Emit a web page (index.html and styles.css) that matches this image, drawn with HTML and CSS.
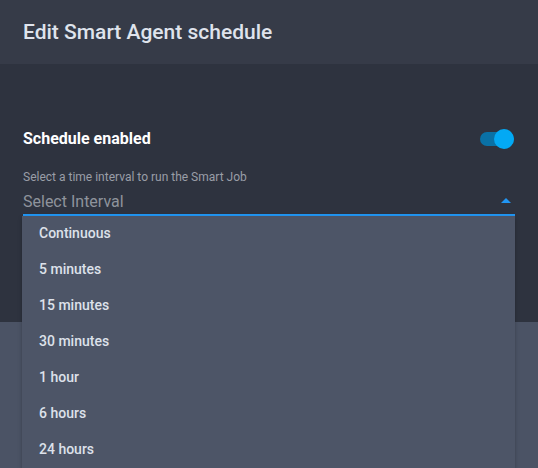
FILE: index.html
```html
<!DOCTYPE html>
<html>
<head>
<meta charset="utf-8">
<link rel="stylesheet" href="styles.css">
</head>
<body>
<div class="dialog">
  <div class="header">
    <h1 class="title">Edit Smart Agent schedule</h1>
  </div>
  <div class="content">
    <div class="row">
      <span class="row-label">Schedule enabled</span>
      <span class="switch"><span class="track"></span><span class="thumb"></span></span>
    </div>
    <div class="field">
      <div class="field-label">Select a time interval to run the Smart Job</div>
      <div class="field-value">
        <span class="placeholder">Select Interval</span>
        <svg class="arrow" width="10" height="5" viewBox="0 0 10 5"><path d="M0 5 L5 0 L10 5 Z" fill="#2196f3"/></svg>
      </div>
    </div>
  </div>
  <ul class="menu">
    <li class="item">Continuous</li>
    <li class="item">5 minutes</li>
    <li class="item">15 minutes</li>
    <li class="item">30 minutes</li>
    <li class="item">1 hour</li>
    <li class="item">6 hours</li>
    <li class="item">24 hours</li>
  </ul>
</div>
</body>
</html>
```
FILE: styles.css
```css
html, body {
  margin: 0;
  padding: 0;
}
body {
  background: #4b5365;
  font-family: Roboto, "Liberation Sans", sans-serif;
  width: 538px;
  height: 468px;
  overflow: hidden;
}
.dialog {
  position: relative;
}
.header {
  height: 64px;
  background: #363b48;
  padding: 0 23px;
  box-sizing: border-box;
}
.title {
  margin: 0;
  padding-top: 19px;
  font-size: 21px;
  line-height: 26px;
  font-weight: 500;
  color: #dfe3ec;
}
.content {
  height: 258px;
  background: #2e333f;
  padding: 65px 23px 0;
  box-sizing: border-box;
}
.row {
  display: flex;
  align-items: center;
  justify-content: space-between;
  height: 20px;
}
.row-label {
  font-size: 16px;
  line-height: 20px;
  font-weight: 700;
  color: #ffffff;
}
.switch {
  position: relative;
  width: 34px;
  height: 20px;
  margin-right: 1px;
}
.track {
  position: absolute;
  left: 0;
  top: 3px;
  width: 34px;
  height: 14px;
  border-radius: 7px;
  background: #0a71a5;
}
.thumb {
  position: absolute;
  right: 0;
  top: 0;
  width: 20px;
  height: 20px;
  border-radius: 50%;
  background: #03a9f4;
}
.field {
  margin-top: 20px;
}
.field-label {
  font-size: 12px;
  line-height: 16px;
  color: #9a9ea7;
}
.field-value {
  margin-top: 5px;
  height: 24px;
  border-bottom: 2px solid #2196f3;
  display: flex;
  align-items: center;
  justify-content: space-between;
}
.placeholder {
  font-size: 16px;
  line-height: 24px;
  color: #8e939c;
}
.arrow {
  margin-right: 4px;
  margin-top: -4px;
}
.menu {
  position: absolute;
  left: 22px;
  top: 216px;
  width: 493px;
  margin: 0;
  padding: 0;
  list-style: none;
  background: #4d5567;
  box-shadow: 0 2px 4px rgba(0,0,0,0.25);
}
.item {
  height: 36px;
  line-height: 34px;
  padding-bottom: 2px;
  box-sizing: border-box;
  padding-left: 17px;
  font-size: 14px;
  font-weight: 500;
  color: #dde1ea;
}
```
